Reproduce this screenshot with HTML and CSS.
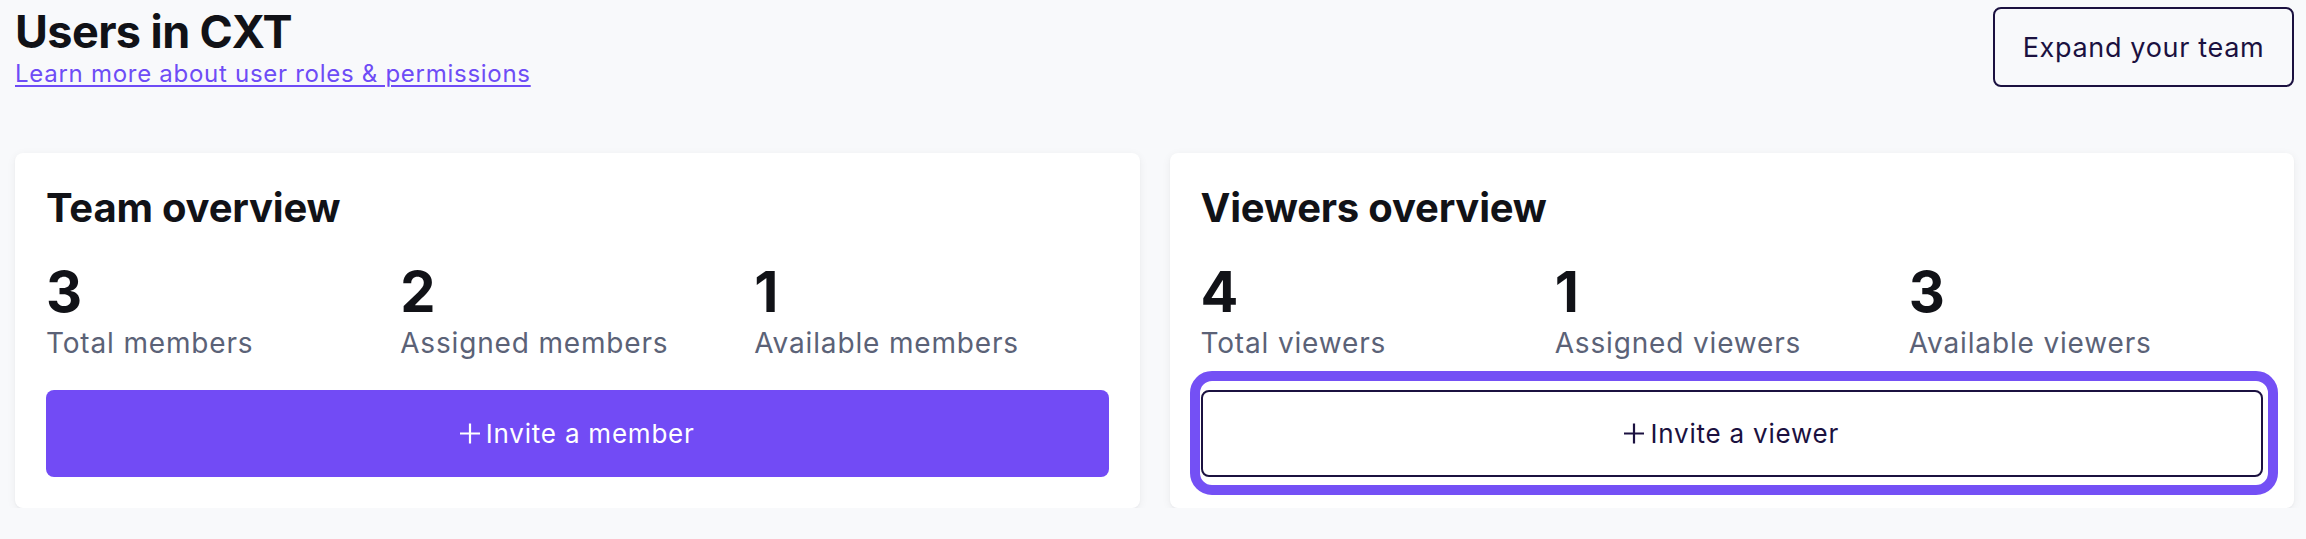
FILE: index.html
```html
<!DOCTYPE html>
<html lang="en">
<head>
<meta charset="utf-8">
<title>Users in CXT</title>
<link rel="stylesheet" href="styles.css">
</head>
<body>
<div class="page">
  <header class="header">
    <div class="header-text">
      <h1 class="title">Users in CXT</h1>
      <a class="learn-link" href="#">Learn more about user roles &amp; permissions</a>
    </div>
    <button class="btn-outline expand-btn" type="button">Expand your team</button>
  </header>

  <main class="cards">
    <section class="card">
      <h2 class="card-title">Team overview</h2>
      <div class="stats">
        <div class="stat"><div class="stat-num">3</div><div class="stat-label">Total members</div></div>
        <div class="stat"><div class="stat-num">2</div><div class="stat-label">Assigned members</div></div>
        <div class="stat"><div class="stat-num">1</div><div class="stat-label">Available members</div></div>
      </div>
      <button class="invite-btn invite-primary" type="button">
        <svg class="plus" viewBox="0 0 20 20" aria-hidden="true"><path d="M10 0v20M0 10h20"/></svg>
        <span>Invite a member</span>
      </button>
    </section>

    <section class="card">
      <h2 class="card-title">Viewers overview</h2>
      <div class="stats">
        <div class="stat"><div class="stat-num">4</div><div class="stat-label">Total viewers</div></div>
        <div class="stat"><div class="stat-num">1</div><div class="stat-label">Assigned viewers</div></div>
        <div class="stat"><div class="stat-num">3</div><div class="stat-label">Available viewers</div></div>
      </div>
      <button class="invite-btn invite-secondary focused" type="button">
        <svg class="plus" viewBox="0 0 20 20" aria-hidden="true"><path d="M10 0v20M0 10h20"/></svg>
        <span>Invite a viewer</span>
      </button>
    </section>
  </main>
</div>
</body>
</html>
```

FILE: styles.css
```css
* { box-sizing: border-box; }

html, body {
  margin: 0;
  padding: 0;
  background: #f8f9fb;
}

body {
  font-family: Inter, "Noto Sans", "Liberation Sans", sans-serif;
  color: #111217;
}

.page {
  padding: 4px 12px 0 15px;
}

.header {
  display: flex;
  justify-content: space-between;
  align-items: flex-start;
}

.header-text {
  display: flex;
  flex-direction: column;
  align-items: flex-start;
}

.title {
  margin: 0;
  font-size: 45px;
  line-height: 55px;
  font-weight: 700;
  letter-spacing: -0.6px;
  color: #111217;
}

.learn-link {
  font-size: 24px;
  line-height: 29px;
  letter-spacing: 0.03em;
  color: #6e4cf6;
  text-decoration: underline;
  text-underline-offset: 3px;
  text-decoration-thickness: 2px;
}

.btn-outline {
  font-family: inherit;
  background: #f8f9fb;
  border: 2px solid #1b1140;
  border-radius: 8px;
  color: #1b1140;
  cursor: pointer;
}

.expand-btn {
  margin-top: 3px;
  width: 301px;
  height: 80px;
  font-size: 27px;
  letter-spacing: 0.025em;
  padding: 0;
}

.cards {
  margin-top: 65px;
  display: grid;
  grid-template-columns: 1fr 1fr;
  gap: 30px;
}

.card {
  background: #ffffff;
  border-radius: 8px;
  padding: 31px;
  box-shadow: 0 2px 10px rgba(20, 24, 40, 0.06), 0 1px 2px rgba(20, 24, 40, 0.04);
}

.card-title {
  margin: 0;
  font-size: 40px;
  line-height: 48px;
  font-weight: 700;
  letter-spacing: -0.2px;
  color: #111217;
}

.stats {
  margin-top: 27px;
  display: grid;
  grid-template-columns: repeat(3, 1fr);
}

.stat-num {
  font-size: 56px;
  line-height: 67px;
  font-weight: 700;
  color: #111217;
}

.stat-label {
  font-size: 28px;
  line-height: 34px;
  letter-spacing: 0.03em;
  color: #5b6277;
}

.invite-btn {
  margin-top: 30px;
  width: 100%;
  height: 87px;
  border-radius: 8px;
  font-family: inherit;
  font-size: 26px;
  letter-spacing: 0.03em;
  display: flex;
  align-items: center;
  justify-content: center;
  gap: 6px;
  cursor: pointer;
  position: relative;
}

.invite-primary {
  background: #724bf5;
  border: none;
  color: #ffffff;
}

.invite-primary .plus path { stroke: #ffffff; }

.invite-secondary {
  background: #ffffff;
  border: 2px solid #1b1140;
  color: #1b1140;
}

.invite-secondary .plus path { stroke: #1b1140; }

.focused::after {
  content: "";
  position: absolute;
  top: -21px;
  bottom: -20px;
  left: -13px;
  right: -17px;
  border: 10px solid #7450f5;
  border-radius: 22px;
  pointer-events: none;
}

.plus {
  width: 20px;
  height: 21px;
  flex: none;
  margin-top: -1px;
}

.plus path {
  fill: none;
  stroke-width: 2.2;
}
```
